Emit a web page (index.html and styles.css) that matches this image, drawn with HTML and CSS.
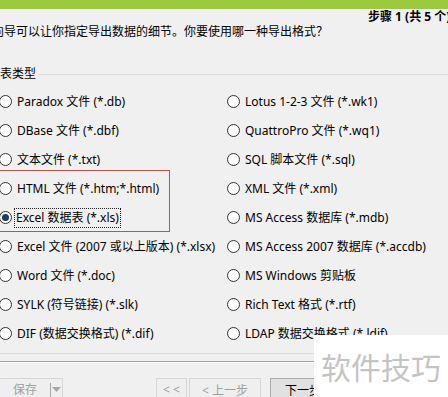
FILE: index.html
```html
<!DOCTYPE html>
<html lang="zh-CN">
<head>
<meta charset="utf-8">
<title>导出向导</title>
<link rel="stylesheet" href="styles.css">
</head>
<body>
<div class="page">
  <div class="titlebar"></div>
  <div class="step">步骤 1 (共 5 个)</div>
  <div class="desc">向导可以让你指定导出数据的细节。你要使用哪一种导出格式？</div>
  <div class="group">
    <div class="legend"><span class="legend-text">表类型</span><span class="legend-line"></span></div>
    <div class="options">
      <label class="opt"><span class="radio"></span><span class="lbl">Paradox 文件 (*.db)</span></label>
      <label class="opt"><span class="radio"></span><span class="lbl">Lotus 1-2-3 文件 (*.wk1)</span></label>
      <label class="opt"><span class="radio"></span><span class="lbl">DBase 文件 (*.dbf)</span></label>
      <label class="opt"><span class="radio"></span><span class="lbl">QuattroPro 文件 (*.wq1)</span></label>
      <label class="opt"><span class="radio"></span><span class="lbl">文本文件 (*.txt)</span></label>
      <label class="opt"><span class="radio"></span><span class="lbl">SQL 脚本文件 (*.sql)</span></label>
      <label class="opt"><span class="radio"></span><span class="lbl">HTML 文件 (*.htm;*.html)</span></label>
      <label class="opt"><span class="radio"></span><span class="lbl">XML 文件 (*.xml)</span></label>
      <label class="opt"><span class="radio checked"></span><span class="lbl focus">Excel 数据表 (*.xls)</span></label>
      <label class="opt"><span class="radio"></span><span class="lbl">MS Access 数据库 (*.mdb)</span></label>
      <label class="opt"><span class="radio"></span><span class="lbl">Excel 文件 (2007 或以上版本) (*.xlsx)</span></label>
      <label class="opt"><span class="radio"></span><span class="lbl">MS Access 2007 数据库 (*.accdb)</span></label>
      <label class="opt"><span class="radio"></span><span class="lbl">Word 文件 (*.doc)</span></label>
      <label class="opt"><span class="radio"></span><span class="lbl">MS Windows 剪贴板</span></label>
      <label class="opt"><span class="radio"></span><span class="lbl">SYLK (符号链接) (*.slk)</span></label>
      <label class="opt"><span class="radio"></span><span class="lbl">Rich Text 格式 (*.rtf)</span></label>
      <label class="opt"><span class="radio"></span><span class="lbl">DIF (数据交换格式) (*.dif)</span></label>
      <label class="opt"><span class="radio"></span><span class="lbl">LDAP 数据交换格式 (*.ldif)</span></label>
    </div>
  </div>
  <div class="group-bottom"></div>
  <div class="separator"></div>
  <div class="buttons">
    <div class="btn split disabled"><span class="split-main">保存</span><span class="split-arrow"><svg width="9" height="5" viewBox="0 0 9 5"><path d="M0 0h9L4.5 5z" fill="#a6a6a6"/></svg></span></div>
    <div class="btn disabled first">&lt; &lt;</div>
    <div class="btn disabled prev">&lt; 上一步</div>
    <div class="btn next">下一步 &gt;</div>
  </div>
  <div class="highlight"></div>
  <div class="watermark">软件技巧</div>
</div>
</body>
</html>
```
FILE: styles.css
```css
html, body {
  margin: 0;
  padding: 0;
}
body {
  background: #f0f0f0;
  font-family: "Noto Sans", "Noto Sans CJK SC", sans-serif;
  font-size: 12px;
  color: #000;
}
.page {
  position: relative;
  width: 448px;
  height: 397px;
  overflow: hidden;
}
.titlebar {
  height: 9px;
  background: #9bcb3c;
}
.step {
  height: 15px;
  line-height: 16px;
  padding-left: 368px;
  font-weight: bold;
  white-space: nowrap;
}
.desc {
  height: 16px;
  line-height: 16px;
  margin-left: -8px;
  white-space: nowrap;
}
.group {
  margin-top: 26px;
}
.legend {
  display: flex;
  align-items: center;
  height: 16px;
}
.legend-text {
  line-height: 16px;
  white-space: nowrap;
}
.legend-line {
  flex: 1;
  height: 1px;
  background: #dcdcdc;
  margin-left: 2px;
}
.options {
  margin-top: 5px;
  margin-left: -1px;
  display: grid;
  grid-template-columns: 228px 1fr;
  grid-auto-rows: 29px;
}
.opt {
  display: flex;
  align-items: center;
  white-space: nowrap;
}
.radio {
  box-sizing: border-box;
  width: 13px;
  height: 13px;
  border: 1px solid #333;
  border-radius: 50%;
  background: #fff;
  flex: none;
  display: flex;
  align-items: center;
  justify-content: center;
}
.radio.checked::after {
  content: "";
  width: 7px;
  height: 7px;
  border-radius: 50%;
  background: #1f3a66;
}
.lbl {
  margin-left: 3px;
  line-height: 16px;
  padding: 1px 1px;
  border: 1px solid transparent;
  margin-top: 1px;
}
.lbl.focus {
  border: 1px dotted #222;
  margin-left: 2px;
}
.group-bottom {
  margin-top: 5px;
  height: 1px;
  background: #dcdcdc;
}
.separator {
  margin-top: 7px;
  height: 1px;
  background: #a0a0a0;
  border-bottom: 1px solid #fff;
}
.buttons {
  margin-top: 15px;
  display: flex;
  align-items: flex-start;
}
.btn {
  box-sizing: border-box;
  height: 23px;
  border: 1px solid #adadad;
  background: #e1e1e1;
  display: flex;
  align-items: center;
  justify-content: center;
  white-space: nowrap;
}
.btn.disabled {
  border-color: #d6d6d6;
  background: #efefef;
  color: #a0a0a0;
}
.split {
  width: 64px;
  margin-left: -1px;
  justify-content: flex-start;
}
.split-main {
  width: 50px;
  text-align: center;
  border-right: 1px solid #a6a6a6;
  line-height: 14px;
}
.split-arrow {
  flex: 1;
  display: flex;
  align-items: center;
  justify-content: center;
}
.first {
  width: 31px;
  margin-left: 93px;
}
.prev {
  width: 72px;
  margin-left: 2px;
}
.next {
  width: 76px;
  margin-left: 9px;
}
.highlight {
  position: absolute;
  left: -2px;
  top: 170px;
  width: 172px;
  height: 62px;
  border: 1px solid #cc4b4b;
  box-sizing: border-box;
}
.watermark {
  position: absolute;
  left: 314px;
  top: 335px;
  right: 0;
  bottom: 0;
  background: #fff;
  color: #c4c4c4;
  font-size: 30px;
  display: flex;
  align-items: center;
  padding-left: 7px;
  white-space: nowrap;
}
```
